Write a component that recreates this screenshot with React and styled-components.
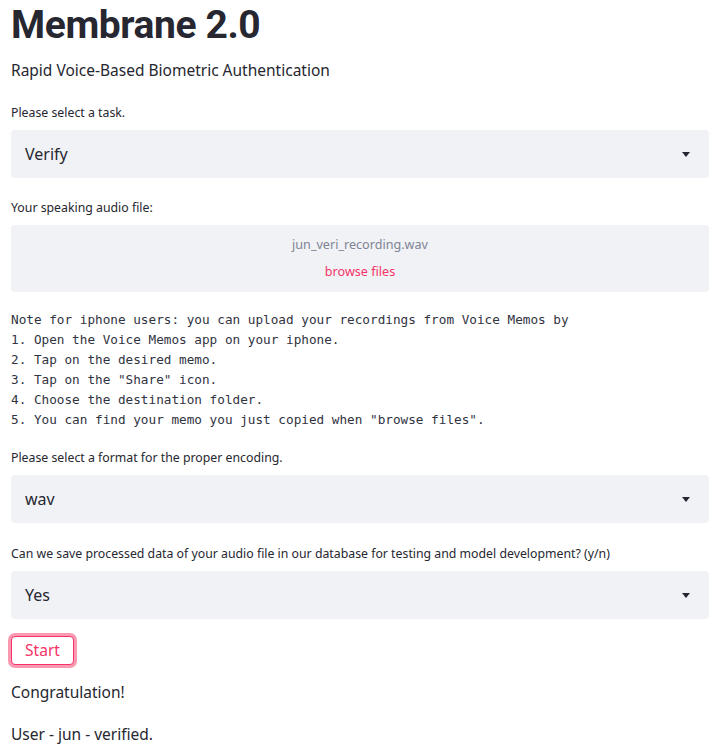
import React from "react";
import styled, { createGlobalStyle } from "styled-components";

const GlobalStyle = createGlobalStyle`
  body {
    margin: 0;
    background: #ffffff;
    color: #262730;
    font-family: "Noto Sans", "Open Sans", sans-serif;
  }
`;

const Page = styled.div`
  width: 698px;
  padding: 0 18px 0 11px;
`;

const Title = styled.h1`
  margin: 0;
  padding-top: 3px;
  font-family: Roboto, "Noto Sans", sans-serif;
  font-size: 39px;
  line-height: 44px;
  font-weight: 700;
  letter-spacing: -0.4px;
  color: #262730;
`;

const Subtitle = styled.p`
  margin: 11px 0 0 0;
  font-size: 15.5px;
  line-height: 24px;
`;

const Field = styled.div`
  margin-top: ${props => props.top}px;
`;

const Label = styled.div`
  font-size: 12.3px;
  line-height: 16px;
  height: 16px;
  margin-bottom: 9px;
  color: #262730;
`;

const SelectBox = styled.div`
  height: 48px;
  border-radius: 4px;
  background: #f0f2f6;
  display: flex;
  align-items: center;
  justify-content: space-between;
  padding: 0 19px 0 14px;
  font-size: 16px;
  color: #262730;
`;

const Caret = styled.svg`
  width: 8px;
  height: 5px;
  fill: #262730;
`;

const DropZone = styled.div`
  height: 67px;
  border-radius: 4px;
  background: #f0f2f6;
  display: flex;
  flex-direction: column;
  align-items: center;
  justify-content: center;
  gap: 9px;
  font-size: 12.6px;
  line-height: 18px;
`;

const FileName = styled.span`
  color: #808495;
`;

const BrowseLink = styled.span`
  color: #f63366;
`;

const Note = styled.pre`
  margin: 18px 0 0 0;
  font-family: "DejaVu Sans Mono", "Liberation Mono", monospace;
  font-size: 12.7px;
  line-height: 20px;
  color: #31333f;
`;

const StartButton = styled.button`
  margin-top: 17px;
  display: block;
  box-sizing: border-box;
  width: 63px;
  height: 29px;
  padding: 0;
  border: 1px solid #f63366;
  border-radius: 4px;
  background: #ffffff;
  color: #f63366;
  font-family: "Noto Sans", "Open Sans", sans-serif;
  font-size: 15.5px;
  line-height: 25px;
  box-shadow: 0 0 0 3px rgba(246, 51, 102, 0.5);
`;

const Message = styled.p`
  margin: ${props => props.top}px 0 0 0;
  font-size: 15.5px;
  line-height: 24px;
`;

const Select = ({ value }) => (
  <SelectBox>
    <span>{value}</span>
    <Caret viewBox="0 0 8 5">
      <path d="M0 0h8L4 5z" />
    </Caret>
  </SelectBox>
);

const note = `Note for iphone users: you can upload your recordings from Voice Memos by
1. Open the Voice Memos app on your iphone.
2. Tap on the desired memo.
3. Tap on the "Share" icon.
4. Choose the destination folder.
5. You can find your memo you just copied when "browse files".`;

export default function App() {
  return (
    <Page>
      <GlobalStyle />
      <Title>Membrane 2.0</Title>
      <Subtitle>Rapid Voice-Based Biometric Authentication</Subtitle>

      <Field top={23}>
        <Label>Please select a task.</Label>
        <Select value="Verify" />
      </Field>

      <Field top={22}>
        <Label>Your speaking audio file:</Label>
        <DropZone>
          <FileName>jun_veri_recording.wav</FileName>
          <BrowseLink>browse files</BrowseLink>
        </DropZone>
      </Field>

      <Note>{note}</Note>

      <Field top={20}>
        <Label>Please select a format for the proper encoding.</Label>
        <Select value="wav" />
      </Field>

      <Field top={23}>
        <Label>
          Can we save processed data of your audio file in our database for
          testing and model development? (y/n)
        </Label>
        <Select value="Yes" />
      </Field>

      <StartButton>Start</StartButton>
      <Message top={15}>Congratulation!</Message>
      <Message top={18}>User - jun - verified.</Message>
    </Page>
  );
}
